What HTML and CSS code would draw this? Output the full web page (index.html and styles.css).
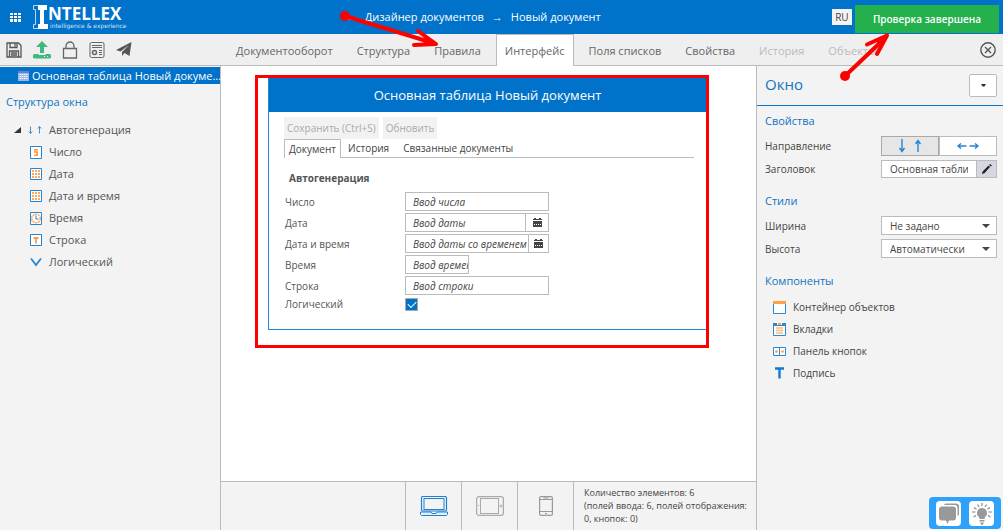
FILE: index.html
```html
<!DOCTYPE html>
<html lang="ru">
<head>
<meta charset="utf-8">
<meta name="viewport" content="width=device-width, initial-scale=1">
<title>Intellex — Новый документ</title>
<link rel="stylesheet" href="styles.css">
</head>
<body>
<div class="app">
  <header class="topbar">
    <div class="brand">
      <button class="icon-btn" aria-label="Меню">
        <svg width="11" height="9" viewBox="0 0 11 9" fill="#fff"><path d="M0 0h3v2H0zM4 0h3v2H4zM8 0h3v2H8zM0 3h3v2H0zM4 3h3v2H4zM8 3h3v2H8zM0 6h3v3H0zM4 6h3v3H4zM8 6h3v3H8z"/></svg>
      </button>
      <a class="logo" href="#">
        <svg width="15" height="24" viewBox="0 0 15 24" fill="none"><path d="M5.500 .5H.5v4h2v15h-2v4h5" stroke="#b9d8f1"/><path d="M5 0h9v5h-3v14h4v5H5v-5h2V5H5z" fill="#fff"/></svg>
        <span class="logo-text"><b>NTELLEX</b><small>intelligence &amp; experience</small></span>
      </a>
    </div>
    <nav class="crumbs" aria-label="Путь">
      <span>→</span><a href="#">Дизайнер документов</a><span>→</span><a href="#">Новый документ</a>
    </nav>
    <div class="top-right">
      <button class="lang">RU</button>
      <div class="toast" role="status">Проверка завершена</div>
    </div>
  </header>

  <div class="toolbar">
    <div class="tools">
      <button class="icon-btn" aria-label="Сохранить"><svg width="16" height="16" viewBox="0 0 16 16" fill="none" stroke="#555" stroke-width="1.300"><path d="M1 1h11.500L15 3.500V15H1z"/><path d="M4 1v4.500h7V1M9 1.500v3M3.500 15V9h9v6M5 11h6M5 13h6"/></svg></button>
      <button class="icon-btn" aria-label="Опубликовать"><svg width="18" height="18" viewBox="0 0 18 18" fill="#3fba7c"><path d="M9 0l6 6h-4v6H7V6H3z"/><path fill-rule="evenodd" d="M2 13h3.500v1h7v-1H16a2 2 0 0 1 0 4.500H2A2 2 0 0 1 2 13zm9 2v1h1v-1zm3 0v1h1v-1z"/></svg></button>
      <button class="icon-btn" aria-label="Заблокировать"><svg width="16" height="18" viewBox="0 0 16 18" fill="none" stroke="#666" stroke-width="1.300"><path d="M1.500 7.500h13v9.500h-13zM4 7.500V5a4 4 0 0 1 8 0v2.500"/></svg></button>
      <button class="icon-btn" aria-label="Параметры"><svg width="16" height="16" viewBox="0 0 16 16" fill="none" stroke="#666"><rect x="1" y=".5" width="14" height="15" rx="1.500"/><path d="M3 3.500h10M3 5.500h10M10 8.500h3M10 10.500h3M10 12.500h3"/><circle cx="5.500" cy="10.500" r="2" stroke-width="1.500"/></svg></button>
      <button class="icon-btn" aria-label="Отправить"><svg width="16" height="15" viewBox="0 0 16 15" fill="#555"><path d="M15.500 0L0 8l4.500 1.500L13 3 6 10v4l2.500-3 5 3z"/></svg></button>
    </div>
    <nav class="tabs">
      <a href="#">Документооборот</a><a href="#">Структура</a><a href="#">Правила</a><a href="#" class="active">Интерфейс</a><a href="#">Поля списков</a><a href="#">Свойства</a><a href="#" class="off">История</a><a href="#" class="off">Объекты</a>
    </nav>
    <button class="icon-btn close" aria-label="Закрыть"><svg width="16" height="16" viewBox="0 0 16 16" fill="none" stroke="#555" stroke-width="1.400"><circle cx="8" cy="8" r="7.200"/><path d="M5 5l6 6M11 5l-6 6"/></svg></button>
  </div>

  <div class="body">
    <aside class="left">
      <a class="root" href="#"><svg width="11" height="10" viewBox="0 0 11 10"><path d="M0 0h11v10H0z" fill="#9bb8e4"/><path d="M0 0h11v2H0z" fill="#5f86c8"/><path d="M1.500 3.500h8M1.500 5.500h8M1.500 7.500h8" stroke="#fff" stroke-dasharray="1.500 .7"/></svg><span>Основная таблица Новый докуме...</span></a>
      <h2 class="head">Структура окна</h2>
      <ul class="tree">
        <li class="parent"><svg width="7" height="7" viewBox="0 0 7 7"><path d="M7 0v6H0z" fill="#333"/></svg><svg width="14" height="12" viewBox="0 0 14 12" fill="none" stroke="#3d92d8"><path d="M2.500 2.500v7M.8 7.500l1.700 2 1.700-2M11.500 9.500v-7M9.800 4.500l1.700-2 1.700 2"/></svg>Автогенерация</li>
        <li><svg width="12" height="13" viewBox="0 0 12 13"><path d="M.5 .5h11v12H.5z" fill="#fff" stroke="#2386d2"/><path d="M8 3.800H4.800V6H7.200v3.200H4" fill="none" stroke="#ff9a45" stroke-width="1.600"/></svg>Число</li>
        <li><svg width="12" height="12" viewBox="0 0 12 12"><path d="M.5 .5h11v11H.5z" fill="#fff" stroke="#2386d2"/><path d="M2 3h8M2 6h8M2 9h8" stroke="#ffa860" stroke-width="2" stroke-dasharray="2 1"/></svg>Дата</li>
        <li><svg width="12" height="12" viewBox="0 0 12 12"><path d="M.5 .5h11v11H.5z" fill="#fff" stroke="#2386d2"/><path d="M2 3h8M2 6h8M2 9h8" stroke="#ffa860" stroke-width="2" stroke-dasharray="2 1"/></svg>Дата и время</li>
        <li><svg width="12" height="13" viewBox="0 0 12 13" fill="none"><path d="M.5 .5h11v12H.5z" fill="#fff" stroke="#2386d2"/><circle cx="6" cy="6.500" r="4.300" stroke="#ffa45a" stroke-width="1.500" stroke-dasharray="2 .7"/><path d="M6 3.500v3.500h2.500" stroke="#2386d2"/></svg>Время</li>
        <li><svg width="12" height="12" viewBox="0 0 12 12" fill="none"><path d="M.5 .5h11v11H.5z" fill="#fff" stroke="#2386d2"/><path d="M3.500 4h5M6 4v5.500" stroke="#ff9a45" stroke-width="1.800"/></svg>Строка</li>
        <li><svg width="12" height="12" viewBox="0 0 12 12" fill="none"><path d="M1 2.500l5 6.500 5-6.500" stroke="#2386d2" stroke-width="1.800"/></svg>Логический</li>
      </ul>
    </aside>

    <main class="center">
      <div class="canvas">
        <div class="mark">
          <section class="card">
            <h1>Основная таблица Новый документ</h1>
            <div class="card-body">
              <div class="actions"><button disabled>Сохранить (Ctrl+S)</button><button disabled>Обновить</button></div>
              <nav class="doc-tabs"><a href="#" class="active">Документ</a><a href="#">История</a><a href="#">Связанные документы</a></nav>
              <h3>Автогенерация</h3>
              <form class="fields">
                <label for="f1">Число</label><div class="ctl"><input id="f1" type="text" placeholder="Ввод числа"></div>
                <label for="f2">Дата</label><div class="ctl"><input id="f2" type="text" placeholder="Ввод даты"><button type="button" aria-label="Выбрать дату"><svg width="9" height="9" viewBox="0 0 9 9" fill="#444"><path d="M1 0h2v1h3V0h2v1h1v1H0V1h1zM0 3h9v3H0zM0 7h9v2H0z"/><path d="M0 6h1v1H0zM2 6h1v1H2zM4 6h1v1H4zM6 6h1v1H6zM8 6h1v1H8z"/></svg></button></div>
                <label for="f3">Дата и время</label><div class="ctl"><input id="f3" type="text" placeholder="Ввод даты со временем"><button type="button" class="slim" aria-label="Выбрать дату и время"><svg width="9" height="9" viewBox="0 0 9 9" fill="#444"><path d="M1 0h2v1h3V0h2v1h1v1H0V1h1zM0 3h9v3H0zM0 7h9v2H0z"/><path d="M0 6h1v1H0zM2 6h1v1H2zM4 6h1v1H4zM6 6h1v1H6zM8 6h1v1H8z"/></svg></button></div>
                <label for="f4">Время</label><div class="ctl short"><input id="f4" type="text" placeholder="Ввод времени"></div>
                <label for="f5">Строка</label><div class="ctl"><input id="f5" type="text" placeholder="Ввод строки"></div>
                <label for="f6">Логический</label><input id="f6" type="checkbox" checked>
              </form>
            </div>
          </section>
        </div>
      </div>
      <footer class="devices">
        <button class="device" aria-label="Компьютер"><svg width="28" height="20" viewBox="0 0 28 20" fill="none" stroke="#2080d0"><rect x="1.500" y=".5" width="25" height="14.500" rx="1.500" stroke-width="1.200"/><rect x="4" y="2.500" width="20" height="11"/><path d="M.5 16h10.500l1 1.500h4l1-1.500h10.500v2.500l-1 1H1.500l-1-1z" fill="#e2f0fb"/></svg></button>
        <button class="device" aria-label="Планшет"><svg width="28" height="20" viewBox="0 0 28 20" fill="none" stroke="#aaa"><rect x=".6" y=".6" width="26.800" height="18.800" rx="2.500" stroke-width="1.200"/><rect x="4.500" y="2.500" width="18" height="15"/><circle cx="25" cy="10" r="1"/><path d="M2 9.500h1"/></svg></button>
        <button class="device" aria-label="Телефон"><svg width="14" height="20" viewBox="0 0 14 20" fill="none" stroke="#999"><rect x=".6" y=".6" width="12.800" height="18.800" rx="1.500" stroke-width="1.200"/><path d="M1 3.500h12M1 15.500h12M6 17.500h2M4.500 2h5"/></svg></button>
        <p>Количество элементов: 6<br>(полей ввода: 6, полей отображения: 0, кнопок: 0)</p>
      </footer>
    </main>

    <aside class="right">
      <div class="right-head"><h2>Окно</h2><button aria-label="Ещё"><svg width="5" height="3" viewBox="0 0 5 3"><path d="M0 0h5L3.500 2.500h-2z" fill="#333"/></svg></button></div>
      <h2 class="head">Свойства</h2>
      <div class="props">
        <span>Направление</span>
        <div class="seg">
          <button class="on" aria-label="Вертикально"><svg width="22" height="14" viewBox="0 0 22 14" fill="none" stroke="#2385d6" stroke-width="1.400"><path d="M3 0v12M.5 9L3 12.500 5.500 9M19 13V2M16.500 5L19 1.500 21.500 5"/></svg></button>
          <button aria-label="Горизонтально"><svg width="22" height="6" viewBox="0 0 22 6" fill="none" stroke="#2385d6" stroke-width="1.400"><path d="M9.500 3H1M4 .5L1 3l3 2.500M12.500 3H21M18 .5L21 3l-3 2.500"/></svg></button>
        </div>
        <label for="p1">Заголовок</label>
        <div class="ctl-edit"><input id="p1" type="text" value="Основная таблица Новый документ"><button aria-label="Изменить"><svg width="10" height="10" viewBox="0 0 10 10" fill="#222"><path d="M0 10l.6-2.600L6.500 1.500l1.500 1.500L2.400 9.200zM7.200 .9L8 0l2 1.500-1.200 1z"/></svg></button></div>
      </div>
      <h2 class="head">Стили</h2>
      <div class="props">
        <label for="p2">Ширина</label><div class="sel"><select id="p2"><option>Не задано</option></select></div>
        <label for="p3">Высота</label><div class="sel"><select id="p3"><option>Автоматически</option></select></div>
      </div>
      <h2 class="head">Компоненты</h2>
      <ul class="comps">
        <li><svg width="13" height="13" viewBox="0 0 13 13"><path d="M.5 .5h12v12H.5z" fill="#fff" stroke="#2b88d2"/><path d="M0 0h13v3H0z" fill="#ffa048"/></svg>Контейнер объектов</li>
        <li><svg width="13" height="13" viewBox="0 0 13 13"><path d="M.5 2.500h12v10H.5z" fill="#fff" stroke="#2b88d2"/><path d="M0 0h4v3H0zM9 0h4v3H9z" fill="#2b88d2"/><path d="M5 0h3v2H5z" fill="#ffa048"/><path d="M3 5h7M3 7.500h7M3 10h7" stroke="#ffb877" stroke-width="1.500"/></svg>Вкладки</li>
        <li><svg width="13" height="9" viewBox="0 0 13 9"><path d="M.5 .5h12v8H.5zM6.500 .5v8" fill="#fff" stroke="#2b88d2"/><circle cx="3.500" cy="4.500" r="1.300" fill="#ff9a45"/><circle cx="9.500" cy="4.500" r="1.300" fill="#ff9a45"/></svg>Панель кнопок</li>
        <li><svg width="13" height="12" viewBox="0 0 13 12"><path d="M2 1.500h9M6.500 1v10.500" fill="none" stroke="#1678ca" stroke-width="2.400"/></svg>Подпись</li>
      </ul>
    </aside>
  </div>
</div>

<div class="help">
  <button aria-label="Чат"><svg width="22" height="21" viewBox="0 0 22 21" fill="#999"><path d="M8 .5h10q3 0 3 3V11q0 1.500-1.500 2V5q0-3-3-3H6Q6.500 .5 8 .5z"/><path d="M4 3.500h11q3 0 3 3v8q0 3-3 3h-4L9.500 21 8 17.500H4q-3 0-3-3v-8q0-3 3-3z"/></svg></button>
  <button aria-label="Подсказки"><svg width="20" height="22" viewBox="0 0 20 22"><path d="M10 5a5 5 0 0 0-3 9l.5 2h5l.5-2a5 5 0 0 0-3-9zM7.500 17h5v1.500h-5zM8 19.500h4L10.500 22h-1z" fill="#999"/><path d="M10 0v3M5.500 1.500L7 4M14.500 1.500L13 4M2 4.500l2.500 1.800M18 4.500l-2.500 1.800M0 9h3.500M20 9h-3.500M1.500 14L4 12.500M18.500 14L16 12.500" stroke="#888" stroke-width="1.200"/></svg></button>
</div>

<svg class="arrow arrow-rules" width="100" height="40" viewBox="0 0 100 40" fill="none" stroke="#f00"><circle cx="5" cy="6" r="5" fill="#f00" stroke="none"/><path d="M5 6L90 32" stroke-width="4"/><path d="M78 21L96 34 74 35" stroke-width="4" stroke-linecap="round" stroke-linejoin="round"/><path d="M84 27L97 34 84 35z" fill="#f00"/></svg>
<svg class="arrow arrow-toast" width="52" height="50" viewBox="0 0 52 50" fill="none" stroke="#f00"><circle cx="5" cy="44" r="5" fill="#f00" stroke="none"/><path d="M5 44L44 7" stroke-width="4"/><path d="M27 12.500L47 3.500 37 22" stroke-width="4" stroke-linecap="round" stroke-linejoin="round"/><path d="M36 9L48 2 42 15z" fill="#f00"/></svg>
</body>
</html>
```
FILE: styles.css
```css
* { box-sizing: border-box; }
body { margin: 0; font: 11px/16px "Open Sans", "Noto Sans", sans-serif; color: #444; }
h1, h2, h3, p, ul { margin: 0; padding: 0; font-weight: 400; }
ul { list-style: none; }
a { color: inherit; text-decoration: none; }
button, input, select { font: inherit; color: inherit; margin: 0; padding: 0; border-radius: 0; }
svg { flex: none; display: block; }
.app { display: flex; flex-direction: column; height: 100vh; overflow: hidden; }

.topbar { display: flex; align-items: center; height: 34px; flex: none; background: #0072c9; color: #fff; }
.brand { display: flex; align-items: center; gap: 12px; padding-left: 10px; }
.icon-btn { display: flex; border: 0; background: none; }
.logo { display: flex; align-items: flex-end; }
.logo-text { display: flex; flex-direction: column; }
.logo-text b { font: 700 17px/17px "Open Sans", sans-serif; }
.logo-text small { font: 6px/7px "DejaVu Sans", sans-serif; color: #cfe4f6; padding-left: 2px; }
.crumbs { flex: 1; display: flex; justify-content: center; gap: 8px; padding-right: 12px; }
.top-right { display: flex; align-items: center; gap: 3px; padding-right: 4px; align-self: stretch; }
.lang { height: 16px; width: 20px; border: 0; background: #f3f3f3; color: #444; font-size: 10px; line-height: 14px; }
.toast { align-self: flex-end; margin-bottom: 1px; padding: 0 18px; background: #25b04e; font-size: 10px; font-weight: 600; line-height: 28px; white-space: nowrap; }

.toolbar { display: flex; align-items: center; height: 32px; flex: none; background: #efefef; border-bottom: 1px solid #bbb; }
.tools { display: flex; align-items: center; gap: 11px; width: 224px; padding-left: 6px; flex: none; }
.tabs { display: flex; flex: 1; align-self: stretch; color: #666; white-space: nowrap; margin-bottom: -1px; }
.tabs a { padding: 0 12px; line-height: 34px; }
.tabs .active { padding: 0 8px; border: 1px solid #bbb; border-bottom: 0; background: #fff; line-height: 32px; margin: 0 3px; }
.tabs .off { color: #bbb; }
.close { margin-right: 7px; }

.body { display: flex; flex: 1; min-height: 0; }
.left { width: 221px; flex: none; background: #f3f3f3; border-right: 1px solid #bbb; }
.root { display: flex; align-items: center; gap: 3px; margin-top: 1px; padding-left: 18px; background: #0072c9; color: #fff; line-height: 17px; white-space: nowrap; }
.head { font-size: 11px; line-height: 16px; color: #0f73c4; }
.left .head { padding: 10px 6px 9px; }
.tree { color: #555; }
.tree li { display: flex; align-items: center; gap: 7px; height: 22px; padding-left: 30px; }
.tree .parent { padding-left: 14px; }

.center { display: flex; flex-direction: column; flex: 1; min-width: 0; background: #fff; }
.canvas { flex: 1; padding: 9px 47px 0 34px; min-height: 0; }
.mark { border: 3px solid #f00; padding: 0 0 15px 10px; }
.card { border: solid #2386d2; border-width: 0 0 1px 1px; }
.card h1 { background: #0072c9; color: #fff; font-size: 13px; line-height: 34px; text-align: center; }
.card-body { padding: 5px 12px 18px 15px; font-size: 10px; }
.actions { display: flex; gap: 4px; }
.actions button { height: 22px; padding: 0 3px; border: 0; background: #f2f2f2; color: #aaa; }
.doc-tabs { display: flex; gap: 8px; border-bottom: 1px solid #bbb; line-height: 18px; }
.doc-tabs a { padding: 0 3px; }
.doc-tabs .active { padding: 0 4px; border: 1px solid #bbb; border-bottom: 0; background: #fff; margin: 0 -4px -1px 0; }
.card h3 { font-size: 10px; font-weight: 700; line-height: 16px; margin: 12px 0 6px 5px; color: #555; }
.fields { display: grid; grid-template-columns: 119px 144px; gap: 2px 1px; align-items: center; color: #555; padding-left: 1px; }
.ctl { display: flex; height: 19px; border: 1px solid #bbb; background: #fff; }
.ctl input { flex: 1; min-width: 0; border: 0; padding-left: 7px; background: none; outline: 0; }
.ctl input::placeholder { color: #444; font-style: italic; opacity: 1; }
.ctl button { display: grid; place-items: center; width: 23px; border: 0; border-left: 1px solid #bbb; background: #fff; }
.ctl .slim { width: 20px; }
.ctl.short { width: 64px; }
.fields label:last-of-type { line-height: 14px; }
.fields input[type="checkbox"] { appearance: none; width: 13px; height: 13px; border: 1px solid #aaa; background: #0072c9; display: grid; place-items: center; }
.fields input[type="checkbox"]:checked::after { content: ""; width: 7px; height: 4px; border: solid #fff; border-width: 0 0 1px 1px; rotate: -45deg; margin-bottom: 2px; }

.devices { display: flex; height: 49px; flex: none; padding-left: 184px; background: #f3f3f3; border-top: 1px solid #bbb; font-size: 9px; line-height: 13px; }
.device { display: grid; place-items: center; width: 56px; flex: none; border: 0; border-left: 1px solid #bbb; background: none; }
.devices p { flex: 1; border-left: 1px solid #bbb; padding: 4px 0 4px 10px; }

.right { width: 247px; flex: none; background: #f3f3f3; border-left: 1px solid #bbb; font-size: 10px; }
.right-head { display: flex; align-items: center; justify-content: space-between; height: 40px; padding: 0 6px 0 8px; border-bottom: 1px solid #0f73c4; }
.right-head h2 { font-size: 15px; color: #0f73c4; line-height: 20px; padding-bottom: 3px; }
.right-head button { display: grid; place-items: center; width: 28px; height: 23px; border: 1px solid #bbb; border-radius: 2px; background: #fff; }
.right .head { padding: 7px 8px 7px; }
.props { display: grid; grid-template-columns: 1fr 116px; gap: 4px 0; align-items: center; padding: 0 6px 8px 8px; }
.seg { display: flex; height: 20px; }
.seg button { flex: 1; display: grid; place-items: center; border: 1px solid #bbb; background: #fff; }
.seg .on { background: #e6e6e6; border-color: #aaa; }
.ctl-edit { display: flex; height: 18px; border: 1px solid #bbb; background: #fff; }
.ctl-edit input { flex: 1; min-width: 0; border: 0; background: none; margin: 0 8px; outline: 0; }
.ctl-edit button { display: grid; place-items: center; width: 20px; border: 0; border-left: 1px solid #bbb; background: #d5d7e2; }
.sel { position: relative; display: flex; }
.sel select { appearance: none; width: 100%; height: 19px; border: 1px solid #bbb; background: #fff; padding: 0 20px 0 8px; }
.sel::after { content: ""; position: absolute; right: 7px; top: 8px; border: solid transparent; border-width: 4px 4px 0; border-top-color: #444; pointer-events: none; }
.comps li { display: flex; align-items: center; gap: 7px; height: 22px; padding-left: 16px; }

.help { position: absolute; right: 2px; bottom: 1px; display: flex; gap: 8px; padding: 4px 7px 3px; background: #2ea2fb; border-radius: 4px; }
.help button { display: grid; place-items: center; width: 25px; height: 25px; border: 0; border-radius: 4px; background: #fff; }
.arrow { position: absolute; pointer-events: none; }
.arrow-rules { left: 340px; top: 10px; }
.arrow-toast { left: 840px; top: 32px; }
```
